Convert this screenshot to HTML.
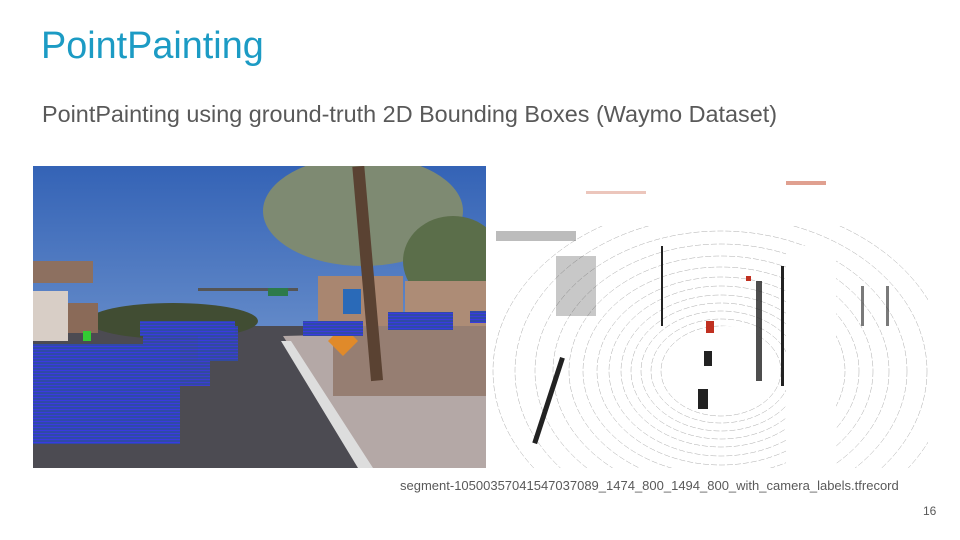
<!DOCTYPE html>
<html><head><meta charset="utf-8"><style>
html,body{margin:0;padding:0;background:#fff;}
body{width:960px;height:540px;position:relative;overflow:hidden;font-family:"Liberation Sans",sans-serif;}
.t{position:absolute;left:41px;top:25px;font-size:37.8px;color:#1c9bc4;}
.s{position:absolute;left:42px;top:101px;font-size:23.4px;color:#595959;}
.c{position:absolute;left:400px;top:478px;font-size:13px;color:#595959;}
.n{position:absolute;left:923px;top:504px;font-size:12px;color:#595959;}
svg{position:absolute;}
</style></head><body>
<div class="t">PointPainting</div>
<div class="s">PointPainting using ground-truth 2D Bounding Boxes (Waymo Dataset)</div>
<svg style="left:33px;top:166px" width="453" height="302" viewBox="0 0 453 302">
<defs><linearGradient id="sk" x1="0" y1="0" x2="0" y2="1"><stop offset="0" stop-color="#3463b6"/><stop offset="1" stop-color="#8aaad8"/></linearGradient>
<pattern id="bl" width="4" height="3" patternUnits="userSpaceOnUse"><rect width="4" height="3" fill="#2f4aa8"/><rect width="4" height="1" fill="#3a3ae0"/></pattern></defs>
<rect width="453" height="302" fill="url(#sk)"/>
<rect y="160" width="453" height="142" fill="#4c4b52"/>
<polygon points="250,170 453,165 453,302 335,302" fill="#b4a8a6"/>
<polygon points="248,175 258,175 340,302 325,302" fill="#ddd"/>
<rect x="300" y="160" width="153" height="70" fill="#967e72"/>
<ellipse cx="330" cy="45" rx="100" ry="55" fill="#7e8a72"/>
<ellipse cx="420" cy="95" rx="50" ry="45" fill="#5b6e4a"/>
<ellipse cx="140" cy="155" rx="85" ry="18" fill="#414d33"/>
<rect x="285" y="110" width="85" height="50" fill="#a98670"/>
<rect x="372" y="115" width="81" height="45" fill="#ad8c76"/>
<rect x="328" y="0" width="12" height="215" fill="#5a4232" transform="rotate(-5 334 100)"/>
<rect x="0" y="95" width="60" height="22" fill="#8d7060"/>
<rect x="0" y="125" width="35" height="50" fill="#d8cec6"/>
<rect x="35" y="137" width="30" height="30" fill="#8a6a58"/>
<rect x="165" y="122" width="100" height="3" fill="#555"/>
<rect x="235" y="122" width="20" height="8" fill="#2d7a4a"/>
<rect x="310" y="123" width="18" height="25" fill="#2a6ab8"/>
<polygon points="310,160 325,175 310,190 295,175" fill="#e08a2a"/>
<rect x="0" y="178" width="147" height="100" fill="url(#bl)"/>
<rect x="110" y="168" width="67" height="52" fill="url(#bl)" opacity="0.9"/>
<rect x="165" y="160" width="40" height="35" fill="url(#bl)" opacity="0.9"/>
<rect x="107" y="155" width="95" height="15" fill="url(#bl)"/>
<rect x="270" y="155" width="60" height="15" fill="url(#bl)"/>
<rect x="355" y="146" width="65" height="18" fill="url(#bl)"/>
<rect x="437" y="145" width="16" height="12" fill="url(#bl)"/>
<rect x="50" y="165" width="8" height="10" fill="#3c3"/>
</svg>
<svg style="left:486px;top:166px" width="442" height="302" viewBox="0 0 442 302">
<rect width="442" height="302" fill="#fff"/>
<g fill="none" stroke="#888" stroke-width="0.5" opacity="0.7" stroke-dasharray="6 2">
<ellipse cx="235" cy="205" rx="60" ry="45"/><ellipse cx="235" cy="205" rx="70" ry="52"/><ellipse cx="235" cy="205" rx="80" ry="60"/>
<ellipse cx="235" cy="205" rx="90" ry="68"/><ellipse cx="235" cy="205" rx="100" ry="76"/><ellipse cx="235" cy="205" rx="112" ry="85"/>
<ellipse cx="235" cy="205" rx="124" ry="94"/><ellipse cx="235" cy="205" rx="138" ry="104"/><ellipse cx="235" cy="205" rx="152" ry="115"/>
<ellipse cx="235" cy="205" rx="168" ry="127"/><ellipse cx="235" cy="205" rx="186" ry="140"/><ellipse cx="235" cy="205" rx="206" ry="155"/>
<ellipse cx="235" cy="205" rx="228" ry="170"/>
</g>
<ellipse cx="240" cy="200" rx="50" ry="40" fill="#fff"/>
<rect x="300" y="80" width="50" height="222" fill="#fff"/>
<rect x="0" y="0" width="442" height="60" fill="#fff"/>
<g fill="#222">
<rect x="175" y="80" width="2" height="80"/><rect x="60" y="190" width="5" height="90" transform="rotate(18 64 235)"/>
<rect x="270" y="115" width="6" height="100" opacity="0.8"/><rect x="295" y="100" width="3" height="120"/>
<rect x="218" y="185" width="8" height="15"/><rect x="212" y="223" width="10" height="20"/>
<rect x="375" y="120" width="3" height="40" opacity="0.6"/><rect x="400" y="120" width="3" height="40" opacity="0.6"/>
<rect x="10" y="65" width="80" height="10" opacity="0.3"/><rect x="70" y="90" width="40" height="60" opacity="0.25"/>
</g>
<rect x="220" y="155" width="8" height="12" fill="#c03020"/>
<rect x="260" y="110" width="5" height="5" fill="#c03020"/>
<rect x="300" y="15" width="40" height="4" fill="#e0a090"/>
<rect x="100" y="25" width="60" height="3" fill="#e0a090" opacity="0.6"/>
</svg>
<div class="c">segment-10500357041547037089_1474_800_1494_800_with_camera_labels.tfrecord</div>
<div class="n">16</div>
</body></html>
